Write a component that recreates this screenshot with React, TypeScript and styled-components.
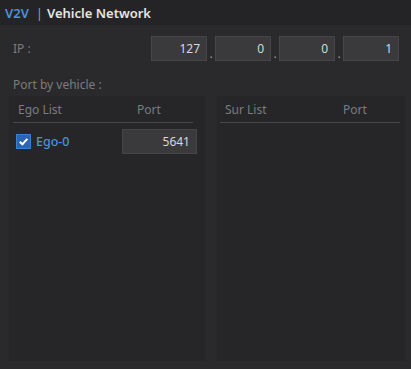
import React from "react";
import styled, { createGlobalStyle } from "styled-components";

const Global = createGlobalStyle`
  html, body { margin: 0; padding: 0; background: #2a2a2c; }
  body { font-family: "Noto Sans", "Open Sans", sans-serif; }
`;

const Page = styled.div`
  width: 411px;
  height: 369px;
  background: #2a2a2c;
  display: flex;
  flex-direction: column;
  box-sizing: border-box;
  overflow: hidden;
`;

const Header = styled.div`
  height: 25px;
  display: flex;
  align-items: center;
  padding-left: 5px;
  font-size: 13px;
  font-weight: 600;
  background: #242426;
`;

const Brand = styled.span`
  color: #4b93dc;
`;
const Sep = styled.span`
  color: #9a9a9a;
  font-weight: 400;
  margin: 0 4px 0 7px;
`;
const Title = styled.span`
  color: #e4e4e4;
`;

const Body = styled.div`
  flex: 1;
  display: flex;
  flex-direction: column;
  padding: 11px 12px 8px 9px;
  background: #2a2a2c;
`;

const IpRow = styled.div`
  display: flex;
  align-items: center;
  height: 25px;
`;

const Label = styled.span`
  color: #7c7c7e;
  font-size: 12px;
  padding-left: 4px;
`;

const IpGroup = styled.div`
  margin-left: auto;
  display: flex;
  align-items: flex-end;
`;

const Box = styled.div<{ $w: number }>`
  width: ${(p) => p.$w}px;
  height: 25px;
  box-sizing: border-box;
  background: #3a3a3c;
  border: 1px solid #464648;
  color: #d8d8d8;
  font-size: 12px;
  display: flex;
  align-items: center;
  justify-content: flex-end;
  padding-right: 6px;
`;

const Dot = styled.span`
  width: 8px;
  text-align: center;
  color: #9a9a9a;
  font-size: 12px;
  line-height: 14px;
`;

const SectionLabel = styled.div`
  margin-top: 15px;
  color: #7c7c7e;
  font-size: 12px;
  padding-left: 4px;
  height: 20px;
  line-height: 18px;
`;

const Panels = styled.div`
  flex: 1;
  display: grid;
  grid-template-columns: 196px 188px;
  column-gap: 12px;
`;

const Panel = styled.div<{ $pl: number; $pr: number }>`
  background: #262628;
  display: flex;
  flex-direction: column;
  padding: 0 ${(p) => p.$pr}px 0 ${(p) => p.$pl}px;
`;

const PanelHead = styled.div<{ $portX: number }>`
  height: 27px;
  box-sizing: border-box;
  display: grid;
  grid-template-columns: ${(p) => p.$portX}px 1fr;
  align-items: center;
  border-bottom: 1px solid #48484a;
  color: #7c7c7e;
  font-size: 12px;
  padding-left: 5px;
  padding-top: 1px;
`;

const Row = styled.div`
  margin-top: 6px;
  display: flex;
  align-items: center;
  height: 25px;
`;

const Check = styled.span`
  width: 15px;
  height: 15px;
  margin-left: 3px;
  background: #2a64b4;
  border: 1px solid #3d80cf;
  box-sizing: border-box;
  display: flex;
  align-items: center;
  justify-content: center;
`;

const Name = styled.span`
  margin-left: 5px;
  color: #4b93dc;
  font-size: 12.5px;
  font-weight: 500;
`;

const PortBox = styled(Box)`
  margin-left: auto;
  margin-right: -4px;
`;

export default function App() {
  return (
    <Page>
      <Global />
      <Header>
        <Brand>V2V</Brand>
        <Sep>|</Sep>
        <Title>Vehicle Network</Title>
      </Header>
      <Body>
        <IpRow>
          <Label>IP :</Label>
          <IpGroup>
            <Box $w={56}>127</Box>
            <Dot>.</Dot>
            <Box $w={56}>0</Box>
            <Dot>.</Dot>
            <Box $w={56}>0</Box>
            <Dot>.</Dot>
            <Box $w={56}>1</Box>
          </IpGroup>
        </IpRow>
        <SectionLabel>Port by vehicle :</SectionLabel>
        <Panels>
          <Panel $pl={4} $pr={12}>
            <PanelHead $portX={119}>
              <span>Ego List</span>
              <span>Port</span>
            </PanelHead>
            <Row>
              <Check>
                <svg width="11" height="11" viewBox="0 0 10 10">
                  <path d="M1.6 5.2 L4 7.5 L8.5 2.6" fill="none" stroke="#fff" strokeWidth="1.8" />
                </svg>
              </Check>
              <Name>Ego-0</Name>
              <PortBox $w={75}>5641</PortBox>
            </Row>
          </Panel>
          <Panel $pl={3} $pr={5}>
            <PanelHead $portX={118}>
              <span>Sur List</span>
              <span>Port</span>
            </PanelHead>
          </Panel>
        </Panels>
      </Body>
    </Page>
  );
}
